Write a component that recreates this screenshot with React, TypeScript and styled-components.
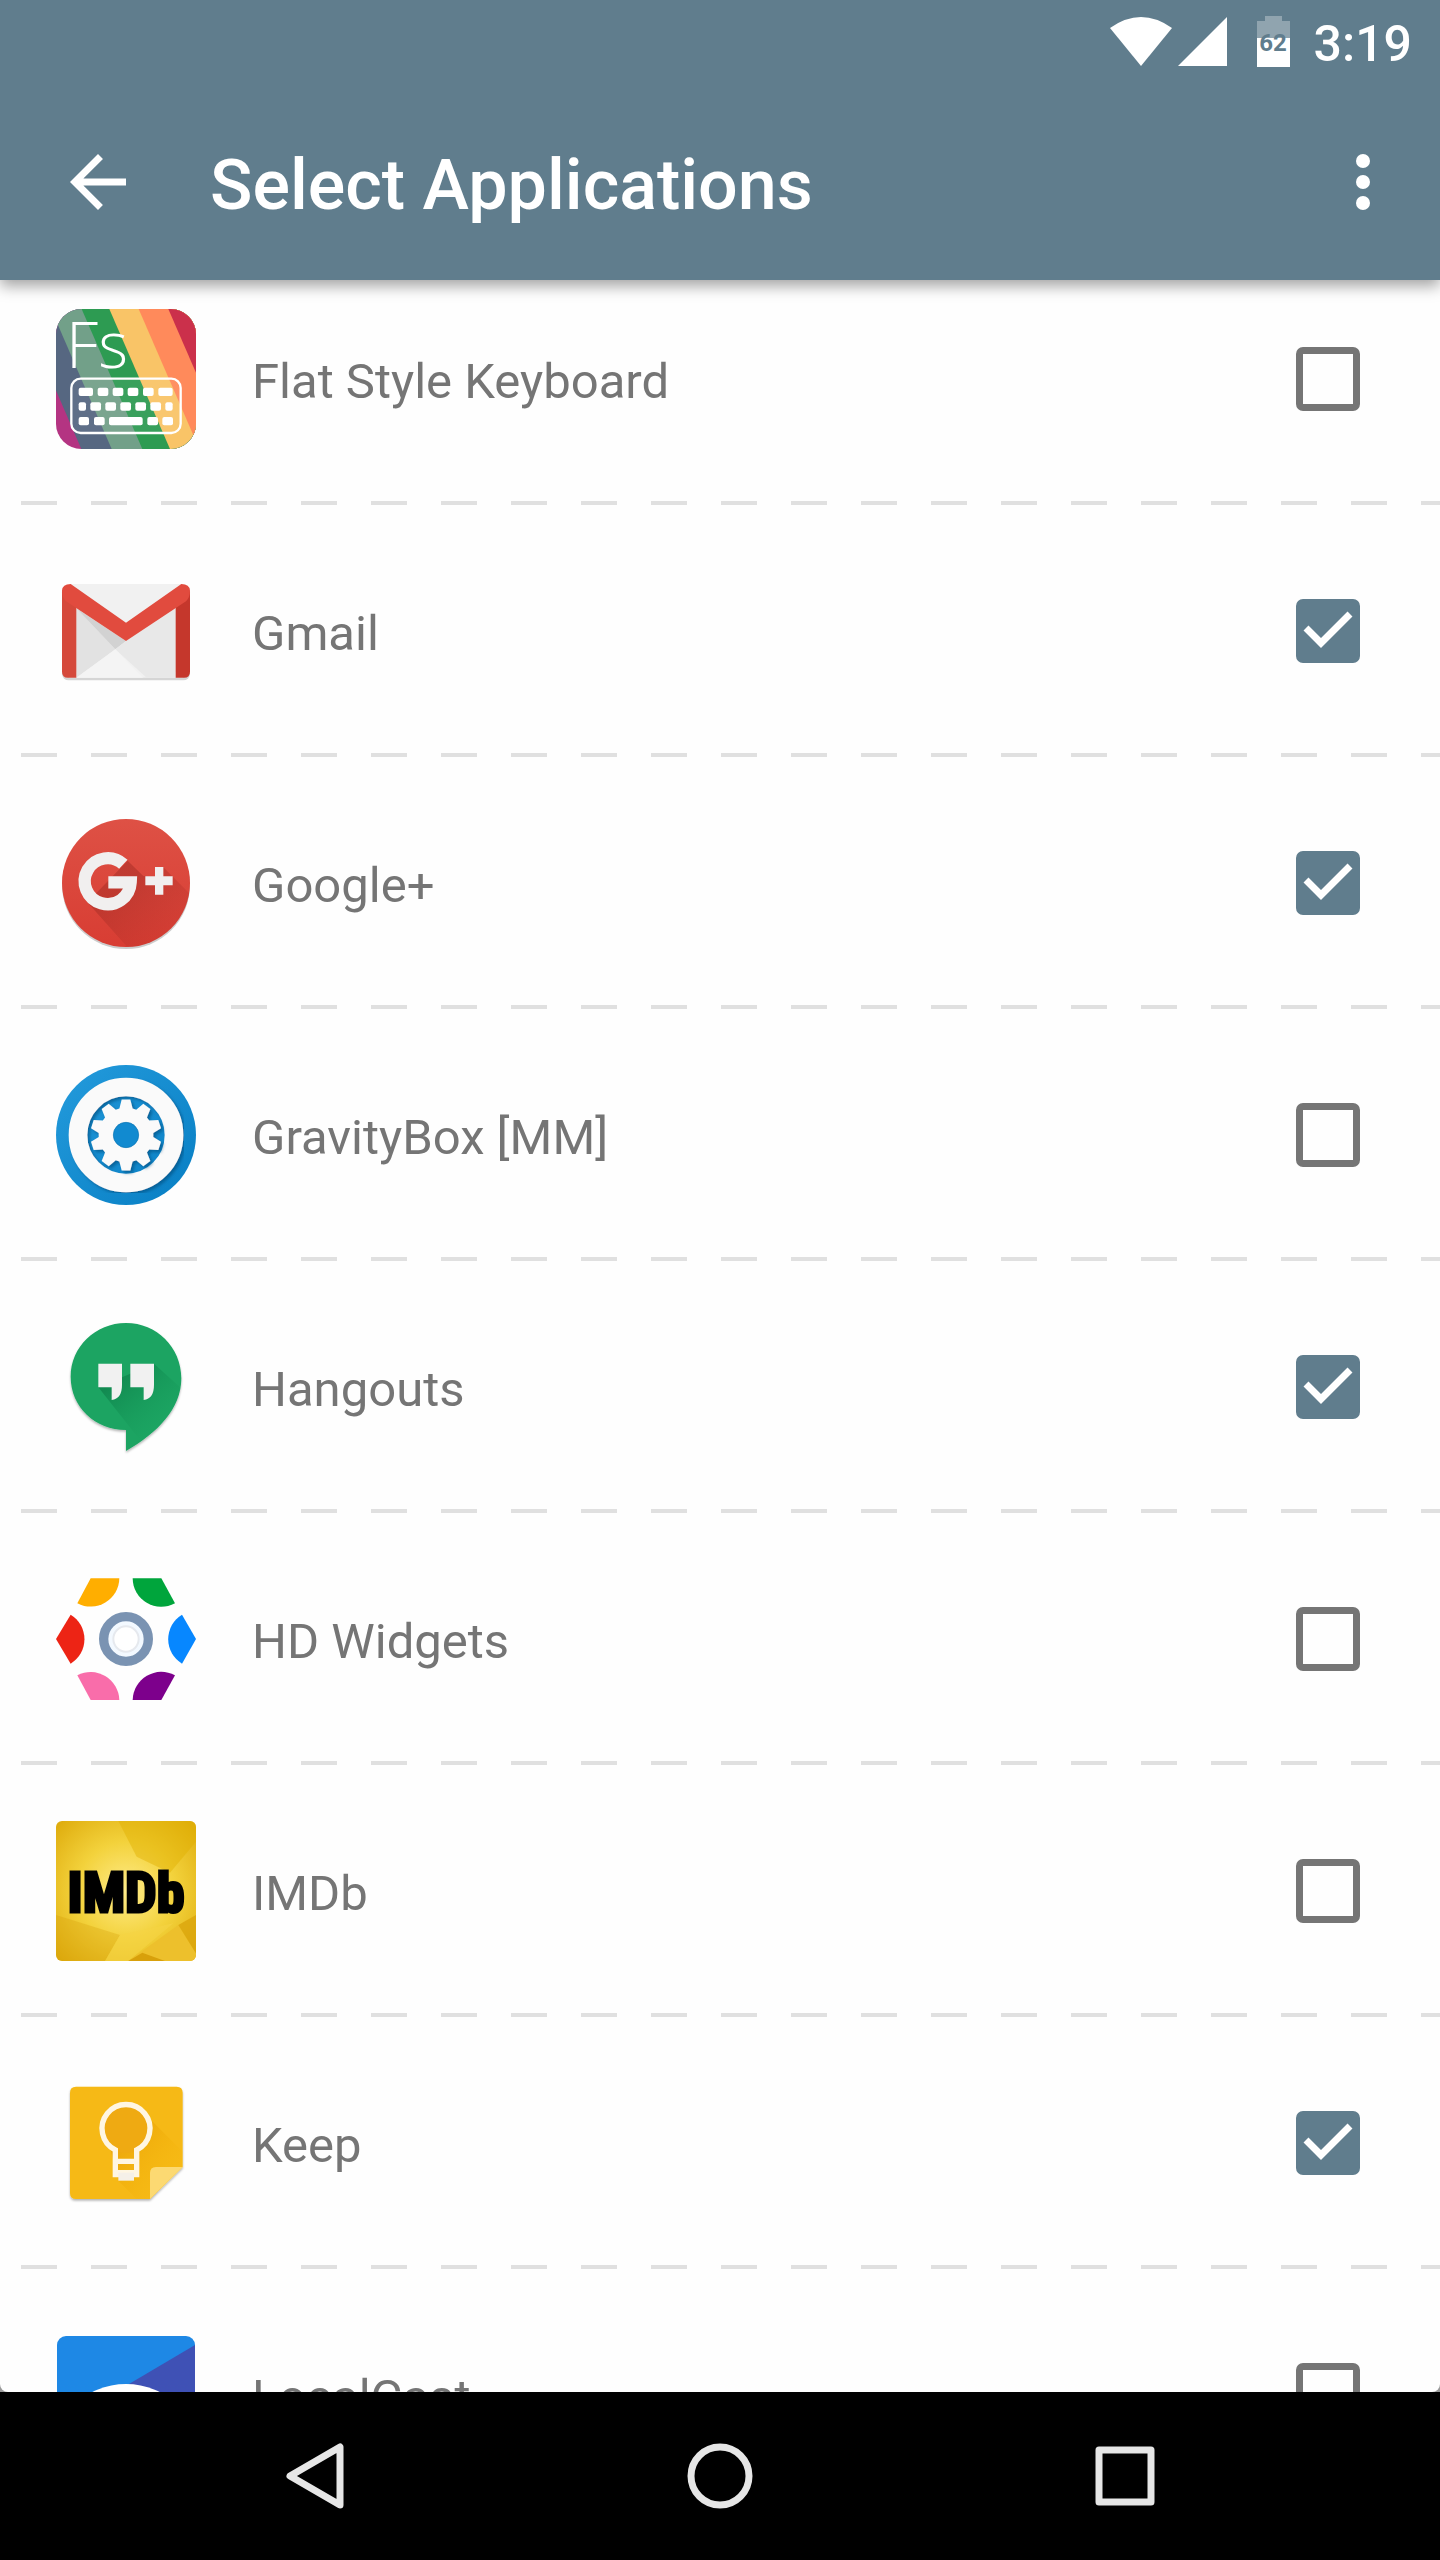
import React, { useState } from "react";
import styled, { createGlobalStyle } from "styled-components";

const GlobalStyle = createGlobalStyle`
  *, *::before, *::after { box-sizing: border-box; }
  body { margin: 0; background: #fefefe; font-family: Roboto, "Noto Sans", sans-serif; }
`;

const slate = "#607d8d";

const Screen = styled.div`
  display: flex;
  flex-direction: column;
  height: 100vh;
  overflow: hidden;
`;

const Header = styled.header`
  position: relative;
  z-index: 1;
  flex: none;
  background: ${slate};
  color: #fff;
  box-shadow: 0 6px 14px rgba(0, 0, 0, 0.36);
`;

const StatusBar = styled.div`
  display: flex;
  justify-content: flex-end;
  align-items: center;
  height: 84px;
  padding-right: 28px;
`;

const StatusIcons = styled.svg`
  display: block;
  width: 180px;
  height: 52px;
  margin-right: 24px;
`;

const BatteryText = styled.text`
  font: 700 24px Roboto, sans-serif;
  fill: ${slate};
  text-anchor: middle;
`;

const Clock = styled.time`
  font-size: 50px;
  font-weight: 500;
  line-height: 56px;
  padding-top: 4px;
`;

const Toolbar = styled.div`
  display: flex;
  align-items: center;
  height: 196px;
  padding: 0 35px 0 56px;
`;

const IconButton = styled.button`
  display: block;
  flex: none;
  width: 84px;
  height: 84px;
  padding: 0;
  border: 0;
  background: none;
  color: inherit;

  svg { display: block; width: 100%; height: 100%; }
`;

const Title = styled.h1`
  flex: 1;
  margin: 0 0 0 70px;
  padding-top: 6px;
  font-size: 70px;
  font-weight: 500;
  line-height: 84px;
`;

const ListViewport = styled.main`
  flex: 1;
  min-height: 0;
  overflow: hidden;
  background: #fefefe;
  border-radius: 0 0 8px 8px;
`;

const Backdrop = styled.div`
  display: flex;
  flex: 1;
  flex-direction: column;
  min-height: 0;
  background: #999;
`;

const AppList = styled.ul`
  margin: -27px 0 0;
  padding: 0;
  list-style: none;
`;

const AppRow = styled.li`
  height: 252px;
  background: repeating-linear-gradient(90deg, #e0e0e0 0 36px, transparent 36px 70px) 21px 100% / 100% 4px no-repeat;
`;

const RowLabel = styled.label`
  display: flex;
  align-items: center;
  height: 100%;
  padding: 0 80px 0 56px;
`;

const AppIcon = styled.svg`
  display: block;
  flex: none;
  width: 140px;
  height: 140px;
`;

const AppName = styled.span`
  flex: 1;
  padding: 6px 0 0 56px;
  color: #757575;
  font-size: 49px;
  line-height: 56px;
`;

const CheckBox = styled.span`
  display: grid;
  flex: none;
  width: 64px;
  height: 64px;

  input, svg { grid-area: 1 / 1; }
  svg { pointer-events: none; width: 100%; height: 100%; }
`;

const CheckInput = styled.input`
  appearance: none;
  width: 100%;
  height: 100%;
  margin: 0;
  border: 7px solid #757575;
  border-radius: 7px;

  &:checked { border-color: ${slate}; background: ${slate}; }
`;

const NavBar = styled.nav`
  display: flex;
  flex: none;
  justify-content: center;
  height: 168px;
  background: #000;
`;

const NavButton = styled.button`
  display: flex;
  flex: 0 1 405px;
  align-items: center;
  justify-content: center;
  padding: 0;
  border: 0;
  background: none;

  svg { width: 84px; height: 84px; fill: none; stroke: #e6e6e6; stroke-width: 7; stroke-linejoin: round; }
`;

const ThinMark = styled.text`
  font: 300 192px "Open Sans", Lato, sans-serif;
  fill: #fff;
`;

const HeavyMark = styled.text`
  font: 700 168px "Liberation Sans Narrow", "Roboto Condensed", Roboto, sans-serif;
  fill: #000;
  stroke: #000;
  stroke-width: 9px;
  text-anchor: middle;
`;

const stripes: [number, string][] = [
  [-58, "#566781"], [33, "#72a089"], [125, "#2d9b52"], [208, "#f9c467"], [296, "#ff8a5b"], [385, "#cb304b"],
];
const keys: [number, number, number][] = [
  [116, 293, 43], [173, 293, 32], [218, 293, 32], [263, 293, 32], [309, 293, 32], [355, 293, 43],
  [116, 337, 22], [151, 337, 32], [196, 337, 32], [241, 337, 32], [286, 337, 32], [331, 337, 32], [376, 337, 22],
  [116, 381, 31], [162, 381, 32], [207, 381, 101], [322, 381, 32], [367, 381, 32],
];

const FlatStyleIcon = () => (
  <AppIcon viewBox="48 57 420 420" aria-hidden="true">
    <clipPath id="fsClip"><rect x="48" y="57" width="420" height="420" rx="76" /></clipPath>
    <g clipPath="url(#fsClip)">
      <rect x="48" y="57" width="420" height="420" fill="#b43482" />
      {stripes.map(([x, color]) => <path key={x} d={`M${x} 57H700V477H${x + 182}Z`} fill={color} />)}
    </g>
    <ThinMark x="78" y="235">Fs</ThinMark>
    <rect x="94" y="266" width="328" height="163" rx="28" fill="#fff" fillOpacity=".06" stroke="#fff" strokeWidth="7" />
    {keys.map(([x, y, w]) => <rect key={`${x}-${y}`} x={x} y={y} width={w} height="25" rx="6" fill="#fff" />)}
  </AppIcon>
);

const GmailIcon = () => (
  <AppIcon viewBox="48 3 420 420" aria-hidden="true">
    <rect x="66" y="77" width="384" height="284" rx="20" fill="#b9b9b9" opacity=".6" />
    <path d="M90 72H426L430 353H86Z" fill="#f1f1f1" />
    <path d="M109 145L226 268L109 353Z" fill="#e2e2e2" />
    <path d="M109 145L258 243L226 268Z" fill="#d2d2d2" />
    <path d="M258 243L407 145V353H320L226 268Z" fill="#e8e8e8" />
    <path d="M109 353L226 268L310 353Z" fill="#f4f4f4" />
    <path d="M66 92L109 125V353H84Q66 353 66 335Z" fill="#d5493b" />
    <path d="M450 92L407 125V353H432Q450 353 450 335Z" fill="#c5372c" />
    <path d="M66 92Q67 72 92 72L258 188L424 72Q449 72 450 92Q450 112 438 124L258 243L78 124Q66 112 66 92Z" fill="#e14b3e" />
  </AppIcon>
);

const GooglePlusIcon = () => (
  <AppIcon viewBox="48 39 420 420" aria-hidden="true">
    <defs>
      <linearGradient id="plusBg" x2="0" y2="1"><stop stopColor="#de5145" /><stop offset="1" stopColor="#d83d33" /></linearGradient>
      <linearGradient id="plusShade" x2="1" y2="1"><stop offset=".25" stopColor="#a92f27" stopOpacity=".55" /><stop offset=".8" stopColor="#b93029" stopOpacity="0" /></linearGradient>
      <clipPath id="plusClip"><circle cx="258" cy="249" r="192" /></clipPath>
    </defs>
    <circle cx="258" cy="255" r="192" fill="#aaa" opacity=".6" />
    <circle cx="258" cy="249" r="192" fill="url(#plusBg)" />
    <path clipPath="url(#plusClip)" d="M142 307L263 182L310 228H370V202L530 362L390 520L270 450Z" fill="url(#plusShade)" />
    <path d="M250 193A69 69 0 1 0 272 247H205" fill="none" stroke="#f1efef" strokeWidth="37" />
    <path d="M345 201h25v28h28v27h-28v28h-25v-28h-29v-27h29Z" fill="#f1efef" />
  </AppIcon>
);

const gearPath = Array.from({ length: 10 }, (_, i) => {
  const base = -90 + i * 36;
  return [[-14, 82], [-7, 107], [7, 107], [14, 82]]
    .map(([offset, r]) => {
      const a = ((base + offset) * Math.PI) / 180;
      return `${(258 + r * Math.cos(a)).toFixed(1)} ${(255 + r * Math.sin(a)).toFixed(1)}`;
    })
    .join("L");
}).join("L");

const GravityIcon = () => (
  <AppIcon viewBox="48 45 420 420" aria-hidden="true">
    <defs>
      <linearGradient id="gravityBg" x2="1" y2="1"><stop stopColor="#249bdc" /><stop offset="1" stopColor="#077ec3" /></linearGradient>
      <filter id="gravityShade"><feDropShadow dx="7" dy="7" stdDeviation="5" floodColor="#064f80" floodOpacity=".65" /></filter>
    </defs>
    <circle cx="258" cy="255" r="210" fill="url(#gravityBg)" />
    <circle cx="258" cy="255" r="144" fill="none" stroke="#fafafa" strokeWidth="56" filter="url(#gravityShade)" />
    <path d={`M${gearPath}Z`} fill="#fafafa" filter="url(#gravityShade)" />
    <circle cx="258" cy="255" r="38" fill="#118ad0" stroke="#0873b2" strokeWidth="2" />
  </AppIcon>
);

const HangoutsIcon = () => (
  <AppIcon viewBox="48 51 420 420" aria-hidden="true">
    <defs>
      <linearGradient id="talkShade" x2="1" y2="1"><stop offset=".2" stopColor="#0b7845" stopOpacity=".6" /><stop offset=".75" stopColor="#109454" stopOpacity="0" /></linearGradient>
      <filter id="talkDrop"><feDropShadow dx="0" dy="5" stdDeviation="3" floodOpacity=".3" /></filter>
      <clipPath id="talkClip"><path d="M258 69C350 69 424 142 424 235C424 326 352 400 258 453V390C166 390 92 321 92 230C92 141 166 69 258 69Z" /></clipPath>
    </defs>
    <path filter="url(#talkDrop)" d="M258 69C350 69 424 142 424 235C424 326 352 400 258 453V390C166 390 92 321 92 230C92 141 166 69 258 69Z" fill="#1ba462" />
    <path clipPath="url(#talkClip)" d="M175 262L342 191L440 280L300 420Z" fill="url(#talkShade)" />
    <path d="M175 191H246V255Q246 296 215 300V262H175ZM271 191H342V255Q342 296 311 300V262H271Z" fill="#f1f1f1" />
  </AppIcon>
);

const HdWidgetsIcon = () => (
  <AppIcon viewBox="48 27 420 420" aria-hidden="true">
    <path d="M152 55H238A86 86 0 0 1 112 130Z" fill="#ffae00" />
    <path d="M364 55H278A86 86 0 0 0 405 130Z" fill="#00a53c" />
    <path d="M48 237L92 164A86 86 0 0 1 92 311Z" fill="#ed2415" />
    <path d="M468 237L426 164A86 86 0 0 0 426 311Z" fill="#0787ff" />
    <path d="M152 420H238A86 86 0 0 0 112 346Z" fill="#f96daa" />
    <path d="M364 420H278A86 86 0 0 1 405 346Z" fill="#7d008c" />
    <circle cx="258" cy="237" r="67" fill="#f3f9ff" stroke="#7a93b2" strokeWidth="28" />
    <circle cx="258" cy="237" r="38" fill="#fff" stroke="#e6e9ee" strokeWidth="6" />
  </AppIcon>
);

const ImdbIcon = () => (
  <AppIcon viewBox="48 63 420 420" aria-hidden="true">
    <defs>
      <radialGradient id="movieBg" r=".7"><stop stopColor="#ffec8a" /><stop offset=".5" stopColor="#f3d23c" /><stop offset="1" stopColor="#deab0c" /></radialGradient>
      <clipPath id="movieClip"><rect x="48" y="63" width="420" height="420" rx="18" /></clipPath>
    </defs>
    <g clipPath="url(#movieClip)">
      <rect x="48" y="63" width="420" height="420" fill="url(#movieBg)" />
      <path d="M235 63H468V125L390 218L290 170Z" fill="#dfb000" opacity=".45" />
      <path d="M48 345L240 405L195 483H48Z" fill="#d59b08" opacity=".3" />
      <path d="M195 483L240 405L400 370L265 483Z" fill="#f5d345" opacity=".6" />
      <path d="M265 483L415 375L468 460V483Z" fill="#edc02c" />
      <path d="M415 375L468 345V460Z" fill="#dba50c" opacity=".8" />
      <path d="M265 483L307 458L375 483Z" fill="#d8a00b" />
    </g>
    <HeavyMark x="258" y="336">IMDb</HeavyMark>
  </AppIcon>
);

const KeepIcon = () => (
  <AppIcon viewBox="48 39 420 420" aria-hidden="true">
    <defs>
      <linearGradient id="noteShade" x2="1" y2="1"><stop offset=".2" stopColor="#e69c08" stopOpacity=".7" /><stop offset=".8" stopColor="#f4b400" stopOpacity="0" /></linearGradient>
      <filter id="noteDrop"><feDropShadow dx="0" dy="5" stdDeviation="3" floodOpacity=".3" /></filter>
    </defs>
    <path filter="url(#noteDrop)" d="M108 80H410Q428 80 428 98V321L330 417H108Q90 417 90 399V98Q90 80 108 80Z" fill="#f6b915" />
    <path d="M209 258L309 156L428 275V321H345Q330 321 330 340V417H290L235 362Z" fill="url(#noteShade)" />
    <circle cx="258" cy="207" r="72" fill="#efaa12" />
    <path d="M226 344V270A72 72 0 1 1 290 270V344ZM226 304H290M226 338H290" fill="none" stroke="#fff6e2" strokeWidth="16" />
    <path d="M235 338H282V362H235Z" fill="#f5f0e8" />
    <path d="M330 417V339Q330 321 348 321H428Z" fill="#fcd972" />
  </AppIcon>
);

const LocalCastIcon = () => (
  <AppIcon viewBox="0 0 140 140" aria-hidden="true">
    <rect x="1" y="11" width="138" height="118" rx="9" fill="#1e88e5" />
    <path d="M139 20V120Q139 129 130 129H73V59Z" fill="#3f51b5" />
    <circle cx="70" cy="134" r="75" fill="#fff" />
  </AppIcon>
);

const apps = [
  { name: "Flat Style Keyboard", Icon: FlatStyleIcon, selected: false },
  { name: "Gmail", Icon: GmailIcon, selected: true },
  { name: "Google+", Icon: GooglePlusIcon, selected: true },
  { name: "GravityBox [MM]", Icon: GravityIcon, selected: false },
  { name: "Hangouts", Icon: HangoutsIcon, selected: true },
  { name: "HD Widgets", Icon: HdWidgetsIcon, selected: false },
  { name: "IMDb", Icon: ImdbIcon, selected: false },
  { name: "Keep", Icon: KeepIcon, selected: true },
  { name: "LocalCast", Icon: LocalCastIcon, selected: false },
];

export default function App() {
  const [selected, setSelected] = useState(apps.map((app) => app.selected));
  const toggle = (index: number) =>
    setSelected((current) => current.map((value, i) => (i === index ? !value : value)));

  return (
    <Screen>
      <GlobalStyle />
      <Header>
        <StatusBar>
          <StatusIcons viewBox="1110 16 180 52" fill="#fff" aria-hidden="true">
            <path d="M1110 28Q1141 6 1172 28L1141 66Z" />
            <path d="M1178 66L1227 17V66Z" />
            <path d="M1265 16H1282V21H1290V38H1257V21H1265Z" opacity=".3" />
            <path d="M1257 38H1290V67H1257Z" />
            <BatteryText x="1273" y="51">62</BatteryText>
          </StatusIcons>
          <Clock>3:19</Clock>
        </StatusBar>
        <Toolbar>
          <IconButton aria-label="Back">
            <svg viewBox="0 0 24 24" fill="currentColor"><path d="M20 11H7.83l5.59-5.59L12 4l-8 8 8 8 1.41-1.41L7.83 13H20v-2z" /></svg>
          </IconButton>
          <Title>Select Applications</Title>
          <IconButton aria-label="More options">
            <svg viewBox="0 0 24 24" fill="currentColor"><circle cx="12" cy="6" r="2" /><circle cx="12" cy="12" r="2" /><circle cx="12" cy="18" r="2" /></svg>
          </IconButton>
        </Toolbar>
      </Header>
      <Backdrop>
        <ListViewport>
          <AppList>
            {apps.map(({ name, Icon }, index) => (
              <AppRow key={name}>
                <RowLabel>
                  <Icon />
                  <AppName>{name}</AppName>
                  <CheckBox>
                    <CheckInput type="checkbox" checked={selected[index]} onChange={() => toggle(index)} />
                    {selected[index] && (
                      <svg viewBox="0 0 64 64" aria-hidden="true">
                        <path d="M10 29L25 44L54 15" fill="none" stroke="#fff" strokeWidth="7" />
                      </svg>
                    )}
                  </CheckBox>
                </RowLabel>
              </AppRow>
            ))}
          </AppList>
        </ListViewport>
      </Backdrop>
      <NavBar>
        <NavButton aria-label="Back"><svg viewBox="0 0 84 84"><path d="M67 13V71L17 42Z" /></svg></NavButton>
        <NavButton aria-label="Home"><svg viewBox="0 0 84 84"><circle cx="42" cy="42" r="29" /></svg></NavButton>
        <NavButton aria-label="Recent apps"><svg viewBox="0 0 84 84"><rect x="16" y="16" width="52" height="52" /></svg></NavButton>
      </NavBar>
    </Screen>
  );
}
